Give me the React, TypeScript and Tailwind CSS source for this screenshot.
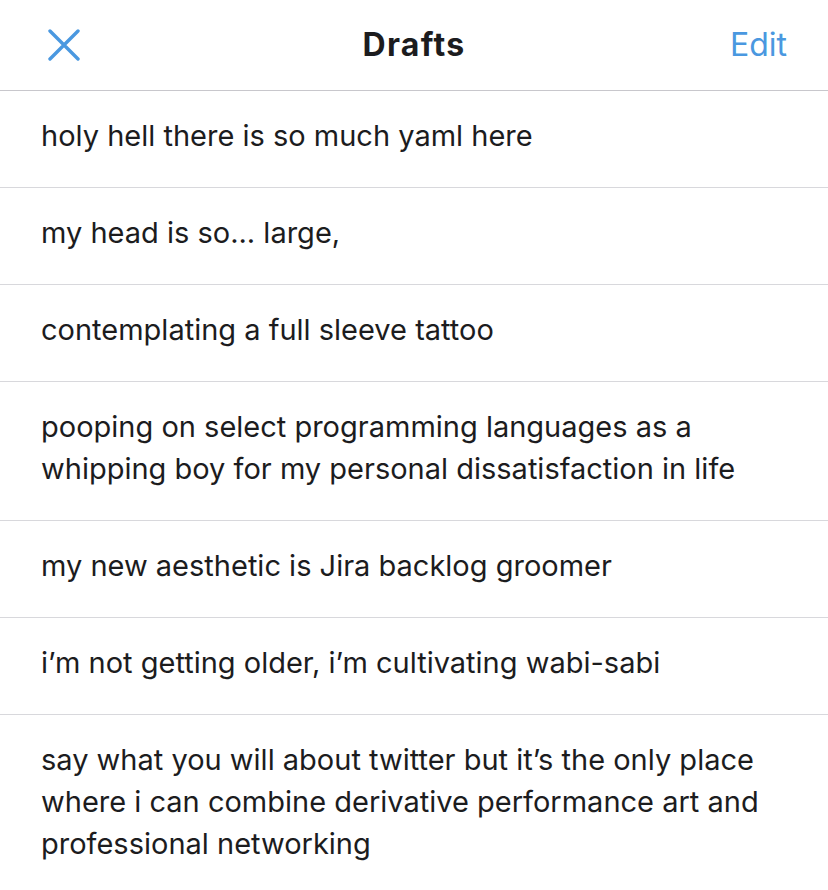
const drafts = [
  'holy hell there is so much yaml here',
  'my head is so... large,',
  'contemplating a full sleeve tattoo',
  'pooping on select programming languages as a whipping boy for my personal dissatisfaction in life',
  'my new aesthetic is Jira backlog groomer',
  'i’m not getting older, i’m cultivating wabi-sabi',
  'say what you will about twitter but it’s the only place where i can combine derivative performance art and professional networking',
]

export default function App() {
  return (
    <div className="w-[828px] h-[890px] overflow-hidden bg-white font-['Inter',sans-serif] text-[#1c1c1e]">
      <header className="relative h-[91px] flex items-center justify-between pl-[48px] pr-[41px] border-b border-[#c8c7cc]">
        <button className="w-[32px] h-[32px] flex items-center justify-center" aria-label="Close">
          <svg width="32" height="32" viewBox="0 0 32 32" fill="none" stroke="#4a98e0" strokeWidth="3.4" strokeLinecap="round">
            <path d="M2 2 L30 30 M30 2 L2 30" />
          </svg>
        </button>
        <h1 className="absolute left-0 right-0 text-center text-[32px] font-bold tracking-[1.3px] pointer-events-none">Drafts</h1>
        <button className="text-[32px] text-[#4a98e0]">Edit</button>
      </header>
      <ul>
        {drafts.map((d, i) => (
          <li
            key={i}
            className="border-b border-[#d8d8dc] pl-[41px] pr-[41px] pt-[24px] pb-[30px] text-[29px] leading-[42px]"
          >
            {d}
          </li>
        ))}
      </ul>
    </div>
  )
}
